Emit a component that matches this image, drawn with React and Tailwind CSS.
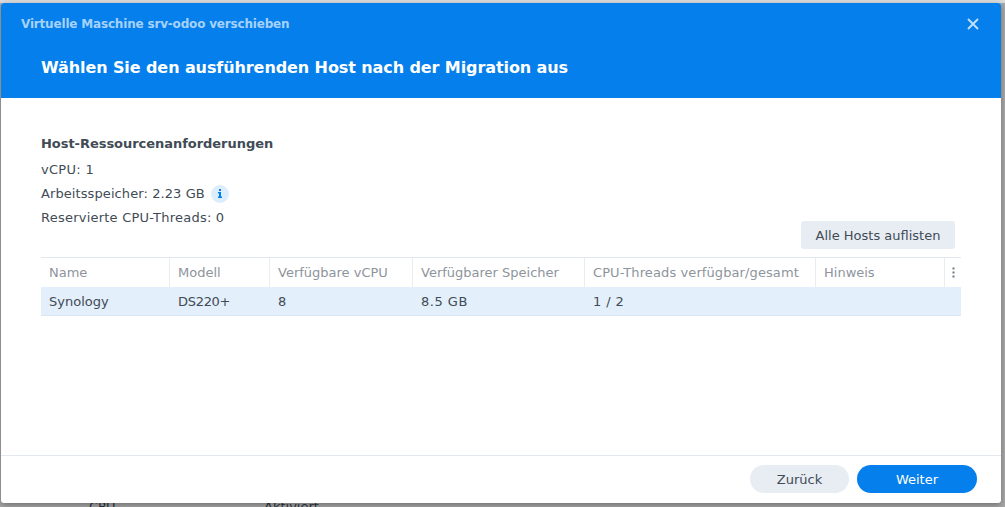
const cols = [
  { n: "Name", w: "w-[129px]", v: "Synology", t: "" },
  { n: "Modell", w: "w-[100px]", v: "DS220+", t: "tracking-[-0.3px]" },
  { n: "Verfügbare vCPU", w: "w-[143px]", v: "8", t: "" },
  { n: "Verfügbarer Speicher", w: "w-[172px]", v: "8.5 GB", t: "tracking-[0.5px]" },
  { n: "CPU-Threads verfügbar/gesamt", w: "w-[231px]", v: "1 / 2", t: "tracking-[0.4px]", h: "tracking-[0.1px]" },
  { n: "Hinweis", w: "w-[129px]", v: "", t: "" },
];

export default function App() {
  return (
    <div className="relative h-[507px] w-[1005px] overflow-hidden bg-[#a8a8a8] font-['DejaVu_Sans',sans-serif] text-[13px] text-[#414b55]">
      <div className="h-[3px] bg-[#dcdcdc]" />
      <div className="absolute top-[497px] left-[89px] flex text-[13px] text-[#2f3640]">
        <span className="w-[175px]">CPU</span>
        <span>Aktiviert</span>
      </div>
      <div className="absolute top-[3px] left-[1px] flex h-[500px] w-[1000px] flex-col overflow-hidden rounded-[3px] bg-white shadow-[0_2px_6px_rgba(0,0,0,0.35)]">
        <header className="h-[95px] shrink-0 bg-[#057feb] pr-5 pl-5">
          <div className="flex h-[41px] items-center justify-between">
            <span className="text-[12px] font-bold tracking-[-0.18px] text-[#a5d2fb]">Virtuelle Maschine srv-odoo verschieben</span>
            <svg width="12" height="12" viewBox="0 0 12 12" className="mr-[2px]">
              <path d="M1 1l10 10M11 1L1 11" stroke="#bfdffb" strokeWidth="2" fill="none" />
            </svg>
          </div>
          <h1 className="ml-5 pt-px text-[16px] leading-[46px] font-bold tracking-[-0.09px] text-white">
            Wählen Sie den ausführenden Host nach der Migration aus
          </h1>
        </header>
        <main className="flex flex-1 flex-col px-10 pt-[36px]">
          <h2 className="text-[13px] leading-[20px] font-bold tracking-[-0.04px]">Host-Ressourcenanforderungen</h2>
          <div className="mt-[4px] leading-[24px] tracking-[0.3px]">vCPU: 1</div>
          <div className="flex h-[24px] items-center tracking-[0.09px]">
            Arbeitsspeicher: 2.23 GB
            <span className="-mt-px ml-[6px] flex h-[18px] w-[18px] items-center justify-center rounded-full bg-[#dcedfd]">
              <svg width="6" height="9" viewBox="0 0 6 9">
                <path d="M2 0h2v2H2zM1 3h3v4.500h1V9H1V7.500h1V4.500H1z" fill="#057feb" />
              </svg>
            </span>
          </div>
          <div className="leading-[24px] tracking-[0.23px]">Reservierte CPU-Threads: 0</div>
          <div className="-mt-[9px] flex justify-end pr-[6px]">
            <button className="h-[28px] w-[154px] rounded-[3px] bg-[#e8edf4] pt-px text-[13px] text-[#414b55]">Alle Hosts auflisten</button>
          </div>
          <div className="mt-[8px] w-[920px]">
            <div className="flex h-[30px] border-t border-[#e3e8ee] text-[#8e949b]">
              {cols.map((c) => (
                <div key={c.n} className={`${c.w} ${c.h || ""} flex items-center border-r border-[#e8edf2] pl-2`}>{c.n}</div>
              ))}
              <div className="flex flex-1 items-center justify-center">
                <svg width="3" height="11" viewBox="0 0 3 11">
                  <path d="M0.500 0.500h2v2h-2zM0.500 4.500h2v2h-2zM0.500 8.500h2v2h-2z" fill="#6f7780" />
                </svg>
              </div>
            </div>
            <div className="flex h-[29px] border-b border-[#d8e5f2] bg-[#e3effb]">
              {cols.map((c) => (
                <div key={c.n} className={`${c.w} ${c.t} flex items-center pt-px pl-2`}>{c.v}</div>
              ))}
            </div>
          </div>
        </main>
        <footer className="flex h-[48px] shrink-0 items-start justify-end gap-2 border-t border-[#e3e7f0] pt-[9px] pr-6">
          <button className="h-[28px] w-[99px] rounded-full bg-[#e8edf4] pt-px text-[13px] text-[#414b55]">Zurück</button>
          <button className="h-[28px] w-[120px] rounded-full bg-[#057feb] pt-px text-[13px] text-white">Weiter</button>
        </footer>
      </div>
    </div>
  );
}
